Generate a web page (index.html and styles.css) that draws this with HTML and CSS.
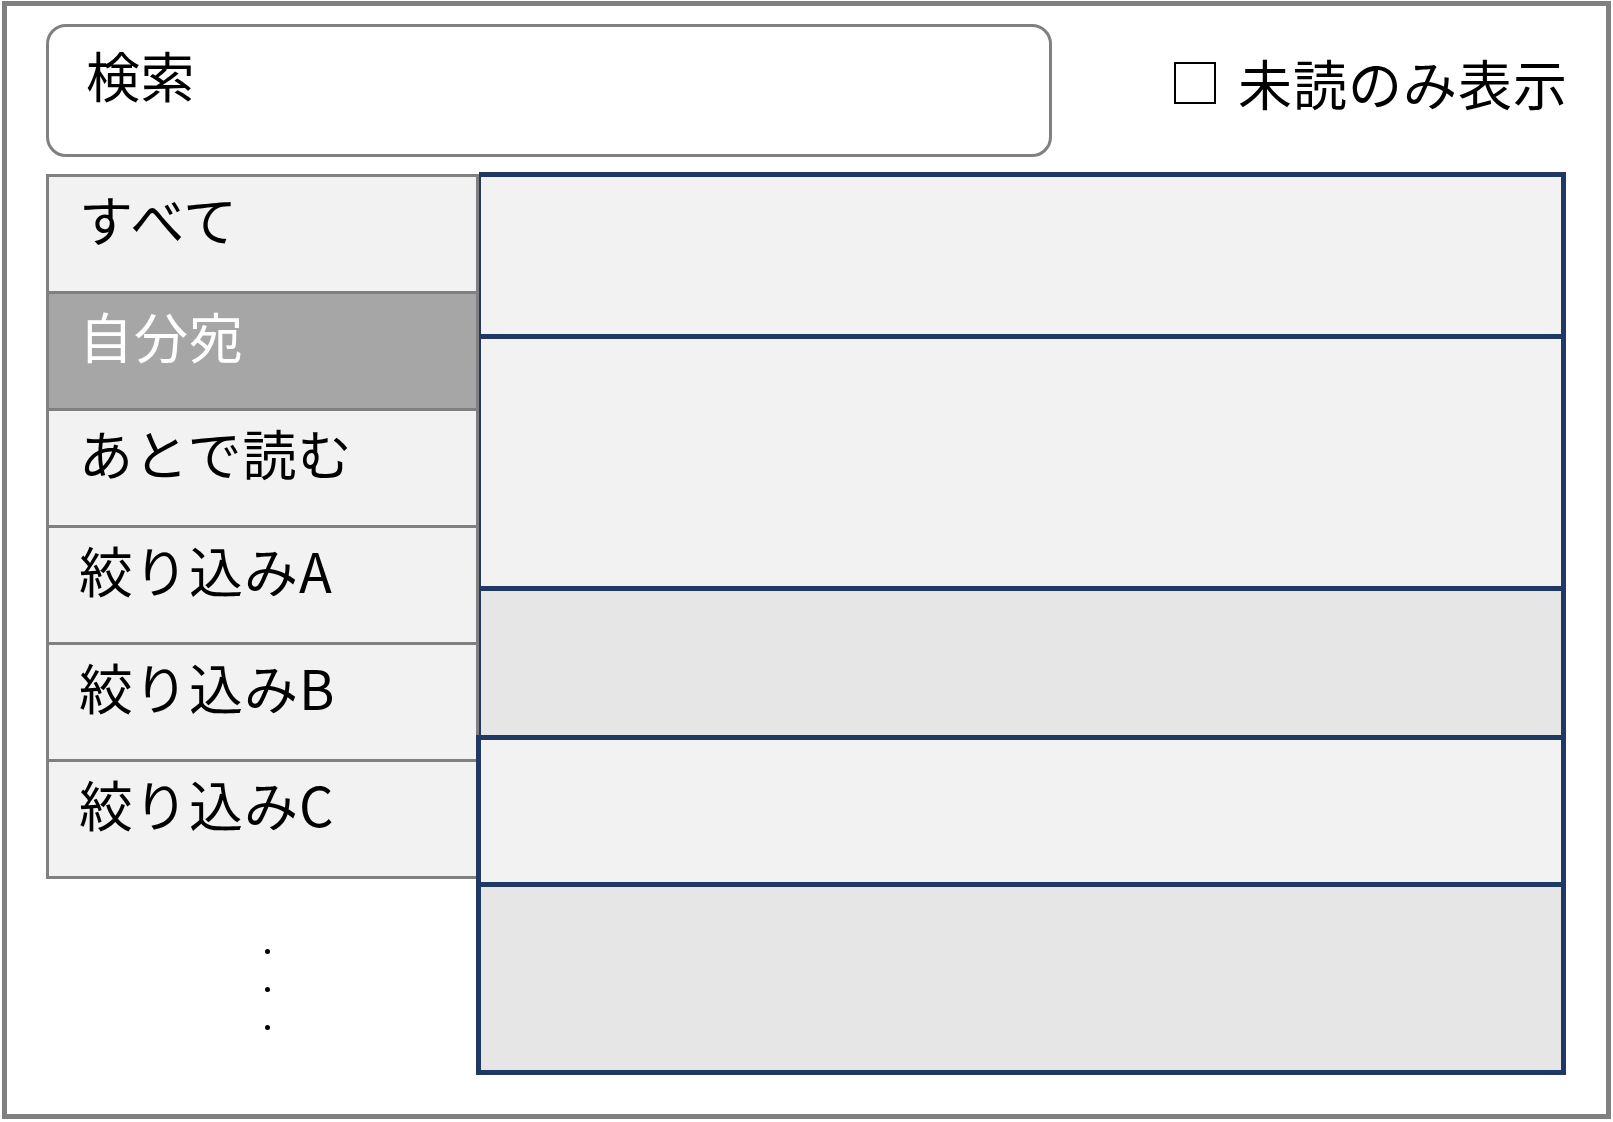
FILE: index.html
```html
<!DOCTYPE html>
<html lang="ja">
<head>
<meta charset="utf-8">
<title>受信一覧</title>
<link rel="stylesheet" href="styles.css">
</head>
<body>
<div class="frame">
  <div class="header">
    <div class="search">検索</div>
    <div class="unread">
      <span class="checkbox" role="checkbox" aria-checked="false"></span>
      <span class="unread-text">未読のみ表示</span>
    </div>
  </div>
  <div class="main">
    <div class="side-col">
      <div class="sidebar">
        <div class="item">すべて</div>
        <div class="item active">自分宛</div>
        <div class="item">あとで読む</div>
        <div class="item">絞り込みA</div>
        <div class="item">絞り込みB</div>
        <div class="item">絞り込みC</div>
      </div>
      <div class="more">
        <span class="dot"></span>
        <span class="dot"></span>
        <span class="dot"></span>
      </div>
    </div>
    <div class="list">
      <div class="group group-a">
        <div class="row row-1"></div>
        <div class="row row-2"></div>
        <div class="row row-3 alt"></div>
      </div>
      <div class="group group-b">
        <div class="row row-4"></div>
        <div class="row row-5 alt"></div>
      </div>
    </div>
  </div>
</div>
</body>
</html>
```

FILE: styles.css
```css
html, body {
  margin: 0;
  padding: 0;
  background: #ffffff;
}

body {
  font-family: "Noto Sans CJK JP", "Noto Sans", sans-serif;
  color: #000000;
}

.frame {
  box-sizing: border-box;
  width: 1609px;
  height: 1118px;
  margin: 1px 2px 3px 2px;
  border: 5px solid #808080;
  padding: 18px 0 0 39px;
}

.header {
  display: flex;
  align-items: flex-start;
}

.search {
  box-sizing: border-box;
  width: 1006px;
  height: 133px;
  border: 3px solid #808080;
  border-radius: 20px;
  padding: 9px 0 0 37px;
  font-size: 54px;
  line-height: 78px;
  letter-spacing: 0.5px;
}

.unread {
  display: flex;
  align-items: center;
  margin: 20px 0 0 122px;
  font-size: 54px;
  line-height: 78px;
}

.unread-text {
  letter-spacing: 1px;
}

.checkbox {
  box-sizing: border-box;
  width: 42px;
  height: 42px;
  border: 2px solid #000000;
  margin-right: 22px;
}

.main {
  display: flex;
  align-items: flex-start;
  margin-top: 15px;
}

.side-col {
  width: 433px;
  margin-top: 2px;
}

.sidebar {
  display: flex;
  flex-direction: column;
  gap: 3px;
  padding: 3px;
  background: #808080;
}

.item {
  height: 114px;
  box-sizing: border-box;
  background: #f2f2f2;
  padding: 3px 0 0 30px;
  font-size: 54px;
  line-height: 78px;
  letter-spacing: 1px;
  white-space: nowrap;
}

.item.active {
  background: #a6a6a6;
  color: #ffffff;
}

.more {
  display: flex;
  flex-direction: column;
  align-items: center;
  gap: 33px;
  padding: 70px 0 0 10px;
}

.dot {
  width: 5px;
  height: 5px;
  border-radius: 50%;
  background: #000000;
}

.list {
  width: 1090px;
  margin-left: -3px;
  display: flex;
  flex-direction: column;
}

.group {
  box-sizing: border-box;
  border-color: #1f3864;
  border-style: solid;
}

.group-a {
  margin-left: 3px;
  border-width: 5px 5px 0 2px;
}

.group-b {
  border-width: 5px 5px 5px 5px;
}

.row {
  background: #f2f2f2;
}

.row.alt {
  background: #e6e6e6;
}

.row-1 {
  height: 157px;
  border-bottom: 5px solid #1f3864;
}

.row-2 {
  height: 247px;
  border-bottom: 5px solid #1f3864;
}

.row-3 {
  height: 144px;
}

.row-4 {
  height: 142px;
  border-bottom: 5px solid #1f3864;
}

.row-5 {
  height: 183px;
}
```
